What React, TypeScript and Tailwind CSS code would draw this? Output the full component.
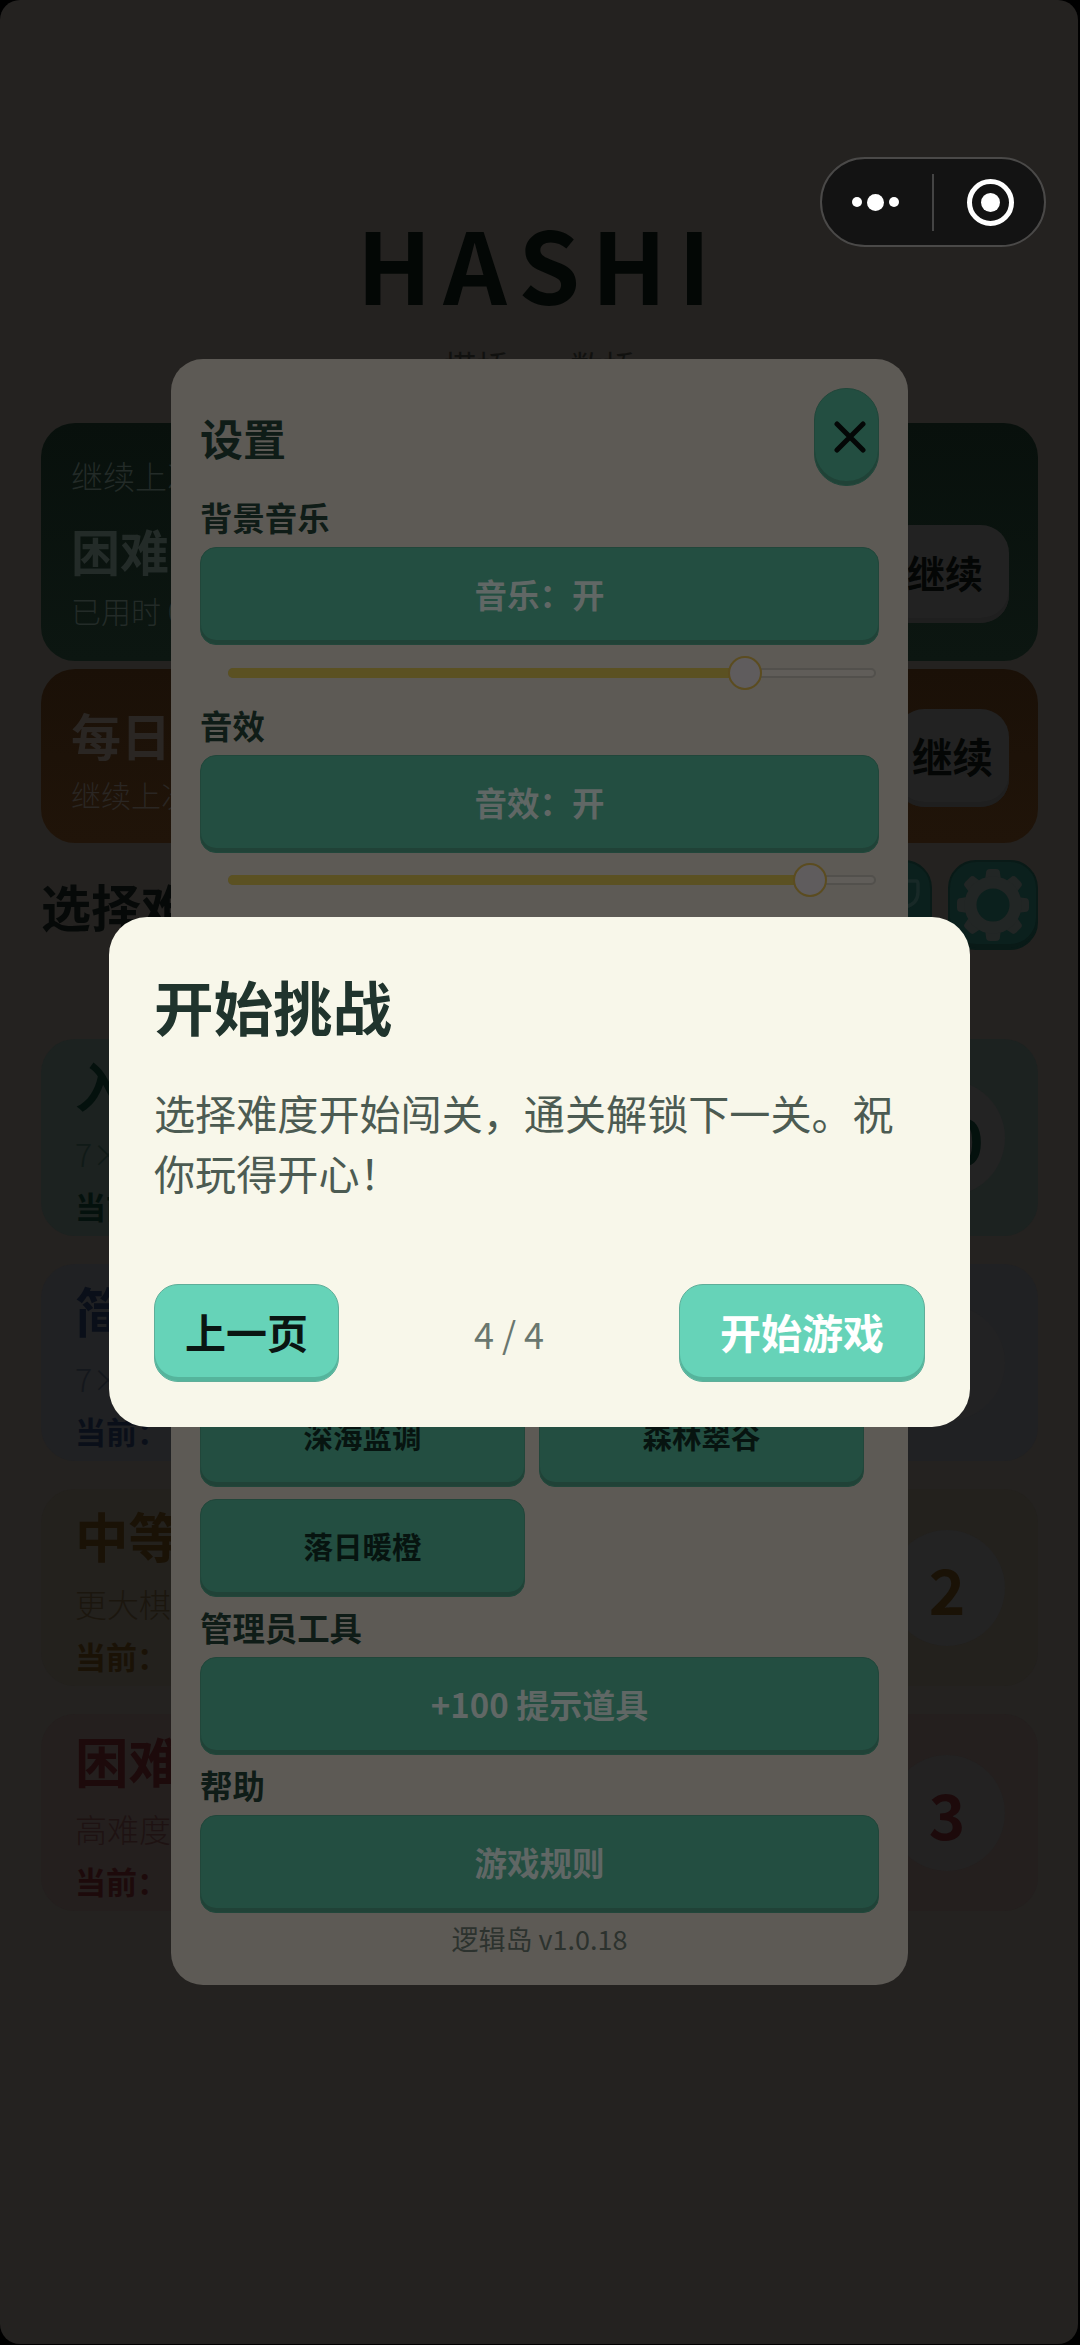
import type { ReactNode } from "react";

const levels = [
  { name: "入门", desc: "7×7 棋盘", count: "10", card: "bg-[#1c2220]", title: "text-[#04110d]", sub: "text-[#101a17]", badge: "bg-[#232323]" },
  { name: "简单", desc: "7×7 棋盘", count: "2", card: "bg-[#202123]", title: "text-[#0a0f19]", sub: "text-[#14171c]", badge: "bg-[#222223]" },
  { name: "中等", desc: "更大棋盘", count: "2", card: "bg-[#23211d]", title: "text-[#1a1206]", sub: "text-[#1b160e]", badge: "bg-[#232323]" },
  { name: "困难", desc: "高难度", count: "3", card: "bg-[#241f1e]", title: "text-[#1d0a0b]", sub: "text-[#1e1212]", badge: "bg-[#232222]" },
];

function DimButton({ children, className = "" }: { children: ReactNode; className?: string }) {
  return (
    <button
      className={`flex h-[98px] items-center justify-center rounded-[16px] border-[1.5px] border-[#21463a] bg-[#234e41] pb-1 text-[32.5px] font-bold leading-none shadow-[inset_0_-4px_0_#204237] ${className}`}
    >
      {children}
    </button>
  );
}

function Slider({ value }: { value: number }) {
  return (
    <div className="relative ml-[28px] mr-[3px] h-[10px] rounded-full border-2 border-[#52504c] bg-[#605d59]">
      <div className="absolute -left-0.5 -top-0.5 h-[10px] rounded-full bg-[#5b5122]" style={{ width: `${value}%` }} />
      <div
        className="absolute -top-[14px] size-[34px] -translate-x-1/2 rounded-full border-2 border-[#5b4c20] bg-[#5f5c5d]"
        style={{ left: `${value}%` }}
      />
    </div>
  );
}

function Label({ children }: { children: ReactNode }) {
  return <div className="text-[32.4px] font-bold leading-[38px] text-[#0f1c17]">{children}</div>;
}

function GearIcon() {
  return (
    <svg viewBox="0 0 74 74" className="size-[74px]" fill="none">
      <g fill="#222625">
        {[0, 45, 90, 135, 180, 225, 270, 315].map((a) => (
          <path key={a} transform={`rotate(${a} 37 37)`} d="M27 16 Q30 10 30 5 Q30 1 34 1 H40 Q44 1 44 5 Q44 10 47 16 Z" />
        ))}
      </g>
      <circle cx="37" cy="37" r="22.5" stroke="#222625" strokeWidth="12" />
    </svg>
  );
}

function TrophyIcon() {
  return (
    <svg viewBox="0 0 86 86" className="size-[86px] shrink-0" fill="none" stroke="#182927" strokeWidth="3.5" strokeLinecap="round" strokeLinejoin="round">
      <path d="M24 14 H62 V34 Q62 54 43 54 Q24 54 24 34 Z M43 54 V68 M30 71 H56" />
      <path d="M62 19 H72 Q74 19 74 22 V30 Q74 42 61 45 M24 19 H14 Q12 19 12 22 V30 Q12 42 25 45" />
    </svg>
  );
}

function Home() {
  return (
    <main className="h-full pl-[41px] pr-[40px] pt-[207px]">
      <h1 className="text-center text-[99px] font-bold leading-[110px] tracking-[11.5px] text-[#030705]">HASHI</h1>
      <p className="mt-[31px] h-[75px] whitespace-pre text-center text-[32.5px] leading-[36px] text-[#11110f]">搭桥  ·  数桥</p>

      <section className="flex h-[238px] justify-between rounded-[34px] bg-linear-to-b from-[#08100c] to-[#0c1611] pl-[30px] pr-[29px]">
        <div className="text-[#232b28]">
          <p className="mt-[34px] text-[32px] font-light leading-[36px]">继续上次</p>
          <h2 className="mt-[28px] text-[49px] font-bold leading-[58px]">困难</h2>
          <p className="mt-[13px] text-[30px] font-light leading-[36px]">已用时 00:42</p>
        </div>
        <button className="mt-[102px] h-[98px] rounded-[28px] bg-[#222222] px-[26px] pb-1 text-[38px] font-bold leading-none text-[#040605] shadow-[inset_0_-5px_0_#1f1f1f]">
          继续
        </button>
      </section>

      <section className="mt-[8px] flex h-[174px] justify-between rounded-[34px] bg-linear-to-b from-[#1a1007] to-[#201409] pl-[30px] pr-[29px]">
        <div className="text-[#2a2623]">
          <h2 className="mt-[36px] text-[50px] font-bold leading-[58px]">每日挑战</h2>
          <p className="mt-[13px] text-[30px] font-light leading-[36px]">继续上次</p>
        </div>
        <button className="mt-[40px] h-[98px] rounded-[28px] bg-[#222222] px-[16px] pb-1 text-[40.5px] font-bold leading-none text-[#040605] shadow-[inset_0_-5px_0_#1f1f1f]">
          继续
        </button>
      </section>

      <div className="mt-[17px] flex h-[90px] items-center">
        <h2 className="flex-1 text-[50px] font-bold leading-none text-[#060908]">选择难度</h2>
        <div className="flex gap-4">
          <div className="flex size-[90px] items-center justify-center rounded-[28px] border-2 border-[#091a17] bg-[#0b201d]">
            <TrophyIcon />
          </div>
          <div className="flex size-[90px] items-center justify-center rounded-[28px] border-2 border-[#091a17] bg-[#0b201d] shadow-[inset_0_-4px_0_#091a17]">
            <GearIcon />
          </div>
        </div>
      </div>

      <div className="mt-[89px] flex flex-col gap-[28px]">
        {levels.map((l) => (
          <section key={l.name} className={`flex h-[197px] justify-between rounded-[34px] pl-[34px] pr-[33px] ${l.card}`}>
            <div className={l.title}>
              <h3 className="mt-[16px] text-[53.5px] font-bold leading-[60px]">{l.name}</h3>
              <p className={`mt-[20px] text-[32px] font-light leading-[36px] ${l.sub}`}>{l.desc}</p>
              <p className="mt-[17px] text-[31px] font-bold leading-[36px]">当前：</p>
            </div>
            <div className={`mt-[41px] flex size-[116px] items-center justify-center rounded-full text-[62px] font-bold leading-none ${l.title} ${l.badge}`}>
              {l.count}
            </div>
          </section>
        ))}
      </div>
    </main>
  );
}

function SettingsPanel() {
  return (
    <div className="absolute left-[171px] top-[359px] flex h-[1626px] w-[737px] flex-col justify-between rounded-[32px] bg-[#5d5a55] px-[29px] pb-[28px] pt-[29px]">
      <div className="flex flex-col">
        <div className="flex items-center justify-between">
          <h2 className="text-[43px] font-bold leading-none text-[#0f1c17]">设置</h2>
          <button className="flex h-[98px] w-[65px] items-center justify-center rounded-[32px] border-[1.5px] border-[#21463a] bg-[#234e41] pl-[7px] shadow-[inset_0_-4px_0_#204237]">
            <svg viewBox="0 0 32 32" className="size-[32px]" stroke="#040706" strokeWidth="5" strokeLinecap="round">
              <path d="M3 3 L29 29 M29 3 L3 29" />
            </svg>
          </button>
        </div>
        <div className="mt-[12px]">
          <Label>背景音乐</Label>
        </div>
        <DimButton className="mt-[11px] text-[#606765]">音乐：开</DimButton>
        <div className="mt-[23px]">
          <Slider value={80} />
        </div>
        <div className="mt-[28px]">
          <Label>音效</Label>
        </div>
        <DimButton className="mt-[11px] text-[#606765]">音效：开</DimButton>
        <div className="mt-[22px]">
          <Slider value={90} />
        </div>
      </div>

      <div className="flex flex-col">
        <div className="grid grid-cols-[325px_325px] gap-x-[14px] gap-y-[12px]">
          {["深海蓝调", "森林翠谷", "落日暖橙"].map((t) => (
            <DimButton key={t} className="text-[29.5px]! text-[#071410]">
              {t}
            </DimButton>
          ))}
        </div>
        <div className="mt-[11px]">
          <Label>管理员工具</Label>
        </div>
        <DimButton className="mt-[11px] text-[#606765]">
          <span className="text-[33px]">+100 提示道具</span>
        </DimButton>
        <div className="mt-[11px]">
          <Label>帮助</Label>
        </div>
        <DimButton className="mt-[11px] text-[#606765]">游戏规则</DimButton>
        <p className="mt-[8px] text-center text-[27px] leading-[36px] text-[#2c322e]">逻辑岛 v1.0.18</p>
      </div>
    </div>
  );
}

function GuideDialog() {
  return (
    <div className="absolute left-[109px] top-[917px] flex h-[510px] w-[861px] flex-col rounded-[38px] bg-[#f8f7ea] px-[45px] pb-[45px] pt-[53px]">
      <h2 className="text-[59.5px] font-bold leading-[70px] text-[#20342d]">开始挑战</h2>
      <p className="mt-[42px] text-[41.1px] leading-[60px] text-[#4c5b52]">选择难度开始闯关，通关解锁下一关。祝你玩得开心！</p>
      <div className="mt-auto flex items-center justify-between">
        <button className="h-[98px] w-[185px] rounded-[24px] border-[1.5px] border-[#5fae99] bg-[#66d3b8] pb-[3px] text-[41px] font-bold leading-none text-[#0a1512] shadow-[inset_0_-4px_0_#55b49c]">
          上一页
        </button>
        <span className="text-[36px] leading-none text-[#6a776f]">4 / 4</span>
        <button className="h-[98px] w-[246px] rounded-[24px] border-[1.5px] border-[#5fae99] bg-[#66d3b8] pb-[3px] text-[41px] font-bold leading-none text-white shadow-[inset_0_-4px_0_#55b49c]">
          开始游戏
        </button>
      </div>
    </div>
  );
}

function Capsule() {
  return (
    <div className="absolute left-[820px] top-[157px] flex h-[90px] w-[226px] items-center rounded-full border-[2.5px] border-[#4a4948] bg-[#131313]">
      <div className="flex flex-1 items-center justify-center gap-[5px] pr-[3px]">
        <i className="size-[10px] rounded-full bg-white" />
        <i className="size-[17px] rounded-full bg-white" />
        <i className="size-[10px] rounded-full bg-white" />
      </div>
      <div className="h-[57px] w-[2px] bg-[#444444]" />
      <div className="flex flex-1 items-center justify-center pl-[3px]">
        <div className="flex size-[47px] items-center justify-center rounded-full border-[5px] border-white">
          <i className="size-[19px] rounded-full bg-white" />
        </div>
      </div>
    </div>
  );
}

export default function App() {
  return (
    <div className="h-[2345px] w-[1080px] overflow-hidden bg-black pb-px pr-[2px] font-['Noto_Sans_CJK_SC',sans-serif]">
      <div className="relative h-[2344px] w-[1078px] overflow-hidden rounded-[20px] bg-[#242220]">
        <Home />
        <SettingsPanel />
        <GuideDialog />
        <Capsule />
      </div>
    </div>
  );
}
